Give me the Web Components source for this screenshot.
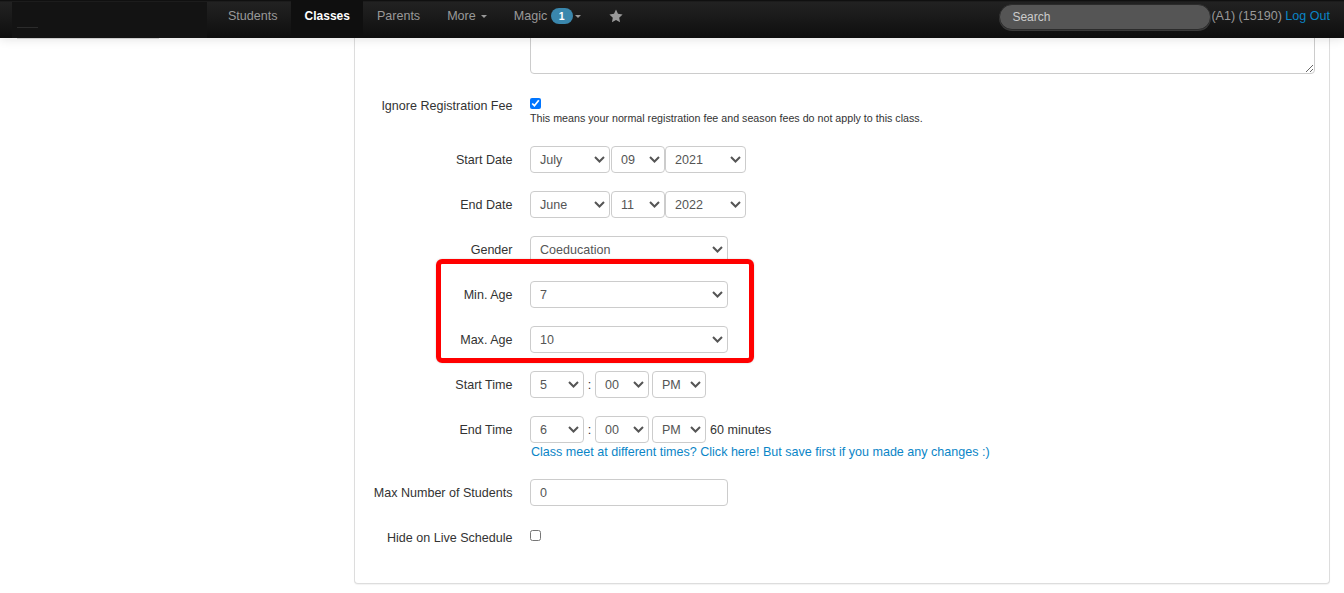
<!DOCTYPE html>
<html><head><meta charset="utf-8"><style>
html,body{margin:0;padding:0;height:593px;overflow:hidden;background:#fff;font-family:"Liberation Sans",Arial,sans-serif;font-size:12.55px;color:#333}
</style></head><body>
<app-nav></app-nav>
<app-page>
<form-row label="">
<textarea slot="x" style="box-sizing:border-box;width:785px;height:74px;border:1px solid #ccc;border-radius:4px;display:block;margin:0"></textarea>
</form-row>
<form-row label="Ignore Registration Fee">
<div><input type="checkbox" checked style="margin:6px 0 2px;display:block;width:11px;height:11px"><div style="font-size:10.7px;line-height:15px">This means your normal registration fee and season fees do not apply to this class.</div></div>
</form-row>
<form-row label="Start Date" style="margin-top:20px"><x-select w="80" v="July"></x-select><x-select w="54" v="09" style="margin-left:1px"></x-select><x-select w="81" v="2021"></x-select></form-row>
<form-row label="End Date"><x-select w="80" v="June"></x-select><x-select w="54" v="11" style="margin-left:1px"></x-select><x-select w="81" v="2022"></x-select></form-row>
<form-row label="Gender"><x-select w="198" v="Coeducation"></x-select></form-row>
<form-row label="Min. Age"><x-select w="198" v="7"></x-select></form-row>
<form-row label="Max. Age"><x-select w="198" v="10"></x-select></form-row>
<form-row label="Start Time"><x-select w="54" v="5"></x-select><span style="width:11px;text-align:center">:</span><x-select w="54" v="00"></x-select><span style="width:3px"></span><x-select w="54" v="PM"></x-select></form-row>
<form-row label="End Time"><div><div style="display:flex;align-items:center"><x-select w="54" v="6"></x-select><span style="width:11px;text-align:center">:</span><x-select w="54" v="00"></x-select><span style="width:3px"></span><x-select w="54" v="PM"></x-select><span style="margin-left:4px">60 minutes</span></div><a href="#" style="display:block;color:#0a85c7;text-decoration:none;line-height:17px;margin:1px 0 0 1px">Class meet at different times? Click here! But save first if you made any changes :)</a></div></form-row>
<form-row label="Max Number of Students" style="margin-top:18px"><input value="0" style="box-sizing:border-box;width:198px;height:27px;border:1px solid #ccc;border-radius:4px;padding:0 9px;font:12.55px 'Liberation Sans',Arial,sans-serif;color:#555;margin:0"></form-row>
<form-row label="Hide on Live Schedule"><input type="checkbox" style="display:block;width:11px;height:11px;margin:6px 0 0"></form-row>
</app-page>
<red-box></red-box>
<script>
const sheet=(s)=>`<style>${s}</style>`;
class AppNav extends HTMLElement{constructor(){super();this.attachShadow({mode:'open'}).innerHTML=sheet(`
:host{position:absolute;left:0;top:0;right:0;height:38px;z-index:5;display:flex;align-items:stretch;background:linear-gradient(#0a0a0a 0,#222 2px,#1e1e1e 10px,#0e0e0e 38px);box-shadow:0 1px 10px rgba(0,0,0,.12);font-size:12.55px;color:#999}
.brand{width:195px;margin-left:12px;margin-top:2px;flex:none;background:#131313;position:relative}
.brand i{position:absolute;left:5px;top:25px;width:21px;height:1px;background:#2b2b2b}
.brand::after{content:"";position:absolute;left:5px;top:36px;width:142px;height:1px;background:#ccc}
nav{display:flex;margin-left:7.5px}
a{display:flex;align-items:center;color:#999;text-decoration:none;padding:0 13.5px;height:32px}
a.on{background:#0f0f0f;color:#fff;font-weight:bold;font-size:12px;height:38px;padding:0 13.5px 6px;box-sizing:border-box}
.caret{display:inline-block;width:0;height:0;border:3.5px solid transparent;border-top-color:#999;border-bottom:0;margin-left:5px}
.badge{background:#3a87ad;color:#fff;font-weight:bold;font-size:10.5px;border-radius:9px;width:22px;height:16px;line-height:16px;text-align:center;margin-left:3.5px}
.star{margin-left:1px}
.sp{flex:1}
.search{box-sizing:border-box;width:212px;height:26px;margin-top:4px;border-radius:13px;background:#555;border:1px solid #2b2b2b;color:#ccc;padding:0 12px;font-size:12px;line-height:24px;box-shadow:0 1px 0 #3a3a3a}
.r{margin:3px 14px 0 0;line-height:26px;white-space:pre;color:#999}
.r b{font-weight:normal;color:#0a85c7}
svg{display:block}
`)+`<div class="brand"><i></i></div><nav><a>Students</a><a class="on">Classes</a><a>Parents</a><a>More<span class="caret"></span></a><a>Magic<span class="badge">1</span><span class="caret" style="margin-left:2px"></span></a><a class="star"><svg width="14" height="14" viewBox="0 0 24 24"><path fill="#999" d="M12 1l3.4 7.3 7.9 1-5.8 5.5 1.5 7.9L12 18.8l-7 3.9 1.5-7.9L.7 9.3l7.9-1z"/></svg></a></nav><div class="sp"></div><div class="search">Search</div><div class="r">(A1) (15190) <b>Log Out</b></div>`}}
class AppPage extends HTMLElement{constructor(){super();this.attachShadow({mode:'open'}).innerHTML=sheet(`
:host{display:block;box-sizing:border-box;margin-left:354px;width:976px;height:584px;border:1px solid #ddd;border-top:0;border-radius:0 0 4px 4px;box-shadow:0 1px 1px rgba(0,0,0,.05);background:#fff}
`)+`<slot></slot>`}}
class FormRow extends HTMLElement{constructor(){super();const l=this.getAttribute('label');this.attachShadow({mode:'open'}).innerHTML=sheet(`
:host{display:flex;align-items:flex-start;margin-top:18px;color:#333}
:host(:first-child){margin-top:0}
.l{width:157.5px;text-align:right;flex:none;margin-right:17.5px;height:27px;line-height:29px;color:#333}
.v{display:flex;align-items:center;flex-wrap:nowrap}
`)+`<div class="l">${l}</div><div class="v"><slot></slot><slot name="x"></slot></div>`}}
class XSelect extends HTMLElement{constructor(){super();const w=this.getAttribute('w'),v=this.getAttribute('v');this.attachShadow({mode:'open'}).innerHTML=sheet(`
:host{box-sizing:border-box;display:flex;align-items:center;height:27px;width:${w}px;border:1px solid #ccc;border-radius:4px;background:#fff;color:#555;padding-left:9px;flex:none}
span{flex:1}
svg{margin-right:4px;display:block}
`)+`<span>${v}</span><svg width="11" height="7" viewBox="0 0 11 7"><path d="M1 1l4.5 4.5L10 1" fill="none" stroke="#555" stroke-width="2"/></svg>`}}
class RedBox extends HTMLElement{constructor(){super();this.attachShadow({mode:'open'}).innerHTML=sheet(`
:host{position:absolute;left:436px;top:259px;width:318px;height:104px;box-sizing:border-box;border:5px solid #f00;border-radius:6px;z-index:3;box-shadow:0 0 2px rgba(0,0,0,.2)}
`)}}
customElements.define('app-nav',AppNav);customElements.define('app-page',AppPage);customElements.define('form-row',FormRow);customElements.define('x-select',XSelect);customElements.define('red-box',RedBox);
</script>
</body></html>
